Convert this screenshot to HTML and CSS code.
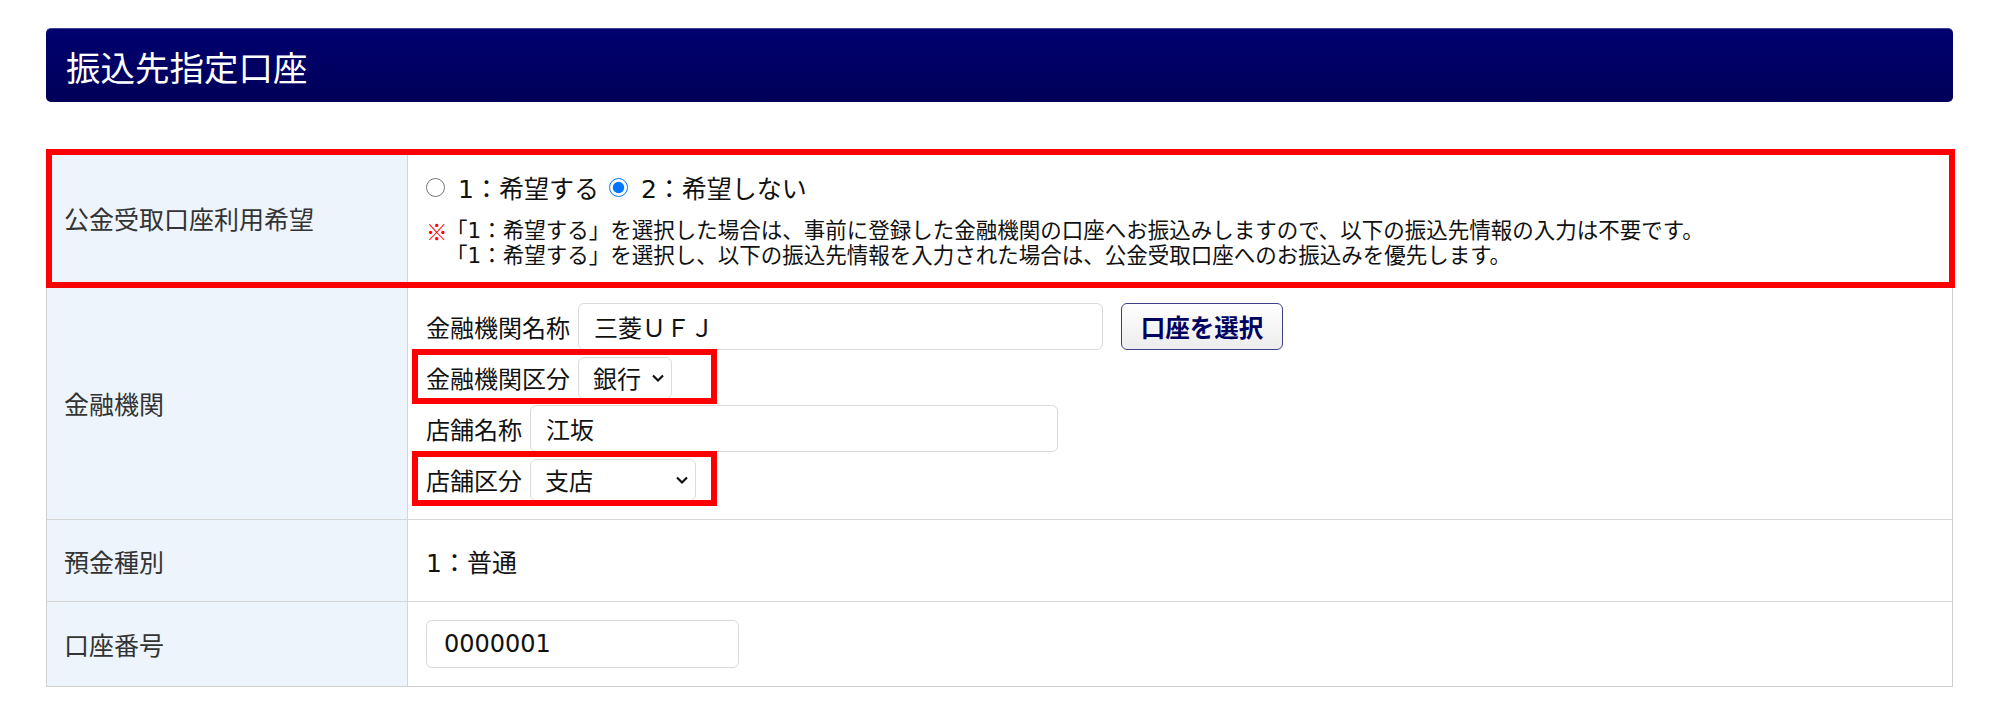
FILE: index.html
```html
<!DOCTYPE html>
<html lang="ja">
<head>
    <meta charset="UTF-8">
    <title>振込先指定口座</title>
    <link rel="stylesheet" href="styles.css">
</head>
<body>
    <div class="page">
        <h2 class="section-title">振込先指定口座</h2>

        <div class="form-table">
            <div class="form-row form-row-marked">
                <div class="form-label">公金受取口座利用希望</div>
                <div class="form-value">
                    <div class="radio-line">
                        <label class="radio"><input type="radio" name="koukin" value="1">1：希望する</label>
                        <label class="radio"><input type="radio" name="koukin" value="2" checked>2：希望しない</label>
                    </div>
                    <div class="note">
                        <span class="note-mark">※</span>
                        <p>「1：希望する」を選択した場合は、事前に登録した金融機関の口座へお振込みしますので、以下の振込先情報の入力は不要です。<br>「1：希望する」を選択し、以下の振込先情報を入力された場合は、公金受取口座へのお振込みを優先します。</p>
                    </div>
                </div>
            </div>

            <div class="form-row">
                <div class="form-label">金融機関</div>
                <div class="form-value form-value-stack">
                    <div class="field-line">
                        <span class="field-name">金融機関名称</span>
                        <input type="text" class="text-input input-bank" value="三菱ＵＦＪ">
                        <button type="button" class="btn-select">口座を選択</button>
                    </div>
                    <div class="field-line marked">
                        <span class="field-name">金融機関区分</span>
                        <div class="select select-bank-type">
                            <span>銀行</span>
                            <svg width="14" height="10" viewBox="0 0 14 10"><path d="M2 2.5 L7 7.5 L12 2.5" fill="none" stroke="#111" stroke-width="2.2"/></svg>
                        </div>
                    </div>
                    <div class="field-line">
                        <span class="field-name">店舗名称</span>
                        <input type="text" class="text-input input-branch" value="江坂">
                    </div>
                    <div class="field-line marked">
                        <span class="field-name">店舗区分</span>
                        <div class="select select-branch-type">
                            <span>支店</span>
                            <svg width="14" height="10" viewBox="0 0 14 10"><path d="M2 2.5 L7 7.5 L12 2.5" fill="none" stroke="#111" stroke-width="2.2"/></svg>
                        </div>
                    </div>
                </div>
            </div>

            <div class="form-row">
                <div class="form-label">預金種別</div>
                <div class="form-value form-value-center">1：普通</div>
            </div>

            <div class="form-row">
                <div class="form-label">口座番号</div>
                <div class="form-value form-value-center">
                    <input type="text" class="text-input input-account" value="0000001">
                </div>
            </div>
        </div>
    </div>
</body>
</html>
```

FILE: styles.css
```css
*, *::before, *::after {
    box-sizing: border-box;
}

body {
    margin: 0;
    background: #ffffff;
    color: #111;
    font-family: "DejaVu Sans", "Noto Sans CJK JP", sans-serif;
}

.page {
    padding: 28px 47px 0 46px;
}

.section-title {
    margin: 0;
    height: 74px;
    display: flex;
    align-items: center;
    padding: 0 20px;
    font-size: 34.5px;
    font-weight: normal;
    color: #ffffff;
    background: linear-gradient(#000070, #000058);
    border-top: 1px solid #3a4690;
    border-radius: 5px;
}

.form-table {
    margin-top: 47px;
    border: 1px solid #cfcfcf;
}

.form-row {
    display: flex;
    border-top: 1px solid #d6d6d6;
}

.form-row:first-child {
    border-top: none;
}

.form-row-marked {
    position: relative;
}

.form-row-marked::after {
    content: '';
    position: absolute;
    top: -1px;
    left: -1px;
    right: -3px;
    bottom: -2px;
    border: 6px solid #ff0000;
    pointer-events: none;
}

.form-label {
    width: 361px;
    flex-shrink: 0;
    display: flex;
    align-items: center;
    padding: 0 17px;
    background: #edf4fc;
    border-right: 1px solid #d6d6d6;
    color: #333;
    font-size: 25px;
}

.form-value {
    flex: 1;
    padding: 18px;
    font-size: 24px;
}

.form-value-center {
    display: flex;
    align-items: center;
    min-height: 81px;
    font-size: 25px;
}

.form-value-stack {
    display: flex;
    flex-direction: column;
    gap: 4px;
    padding: 16px 18px;
}

.radio-line {
    display: flex;
    align-items: center;
    height: 38px;
    font-size: 25px;
}

.radio {
    display: flex;
    align-items: center;
    margin-right: 10px;
}

.radio input {
    width: 19px;
    height: 19px;
    margin: 0 13px 0 0;
}

.note {
    display: flex;
    margin-top: 12px;
    font-size: 21.5px;
    line-height: 25px;
}

.note-mark {
    width: 20px;
    flex-shrink: 0;
    color: #ff0000;
    font-family: "Noto Sans CJK JP", sans-serif;
}

.note p {
    margin: 0;
}

.field-line {
    display: flex;
    align-items: center;
    height: 47px;
    gap: 8px;
    position: relative;
}

.field-line.marked::after {
    content: '';
    position: absolute;
    left: -14px;
    top: -5px;
    bottom: -3px;
    width: 305px;
    border: 6px solid #ff0000;
}

.field-name {
    font-size: 24px;
}

.text-input {
    height: 47px;
    padding: 0 15px;
    border: 1px solid #d9d9d9;
    border-radius: 6px;
    background: #fff;
    color: #111;
    font-family: inherit;
    font-size: 24px;
}

.input-bank {
    width: 525px;
}

.input-branch {
    width: 528px;
}

.input-account {
    width: 313px;
    height: 48px;
    padding: 0 17px;
}

.btn-select {
    margin-left: 10px;
    width: 162px;
    height: 47px;
    border: 1px solid #3c4186;
    border-radius: 6px;
    background: linear-gradient(#ffffff, #ececec);
    color: #000060;
    font-family: inherit;
    font-size: 24.5px;
    font-weight: bold;
}

.select {
    height: 42px;
    display: flex;
    align-items: center;
    justify-content: space-between;
    padding: 0 6px 0 14px;
    border: 1px solid #dcdcdc;
    border-radius: 6px;
    font-size: 24px;
}

.select-bank-type {
    width: 94px;
}

.select-branch-type {
    width: 166px;
}
```
